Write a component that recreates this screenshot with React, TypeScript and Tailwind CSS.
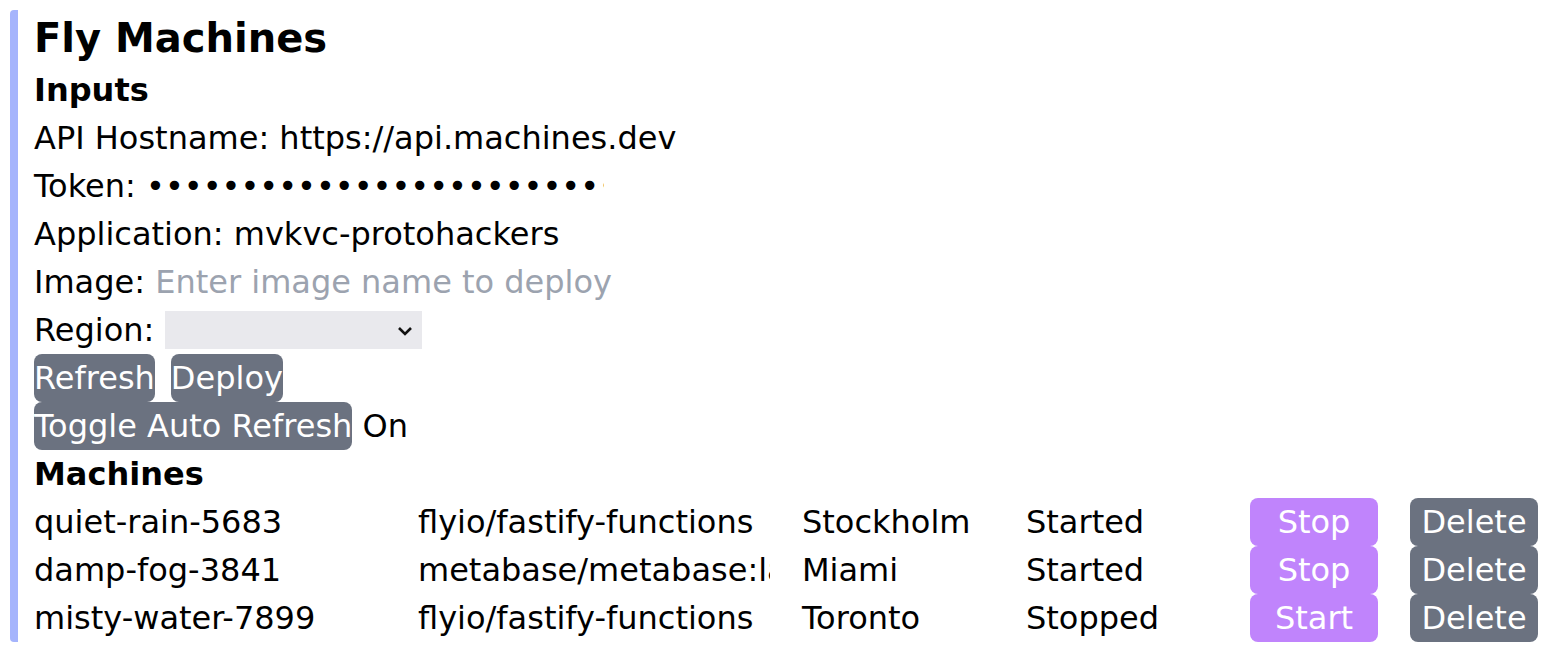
import React, { useState } from 'react';

type Machine = {
  name: string;
  image: string;
  region: string;
  state: 'Started' | 'Stopped';
};

const machines: Machine[] = [
  { name: 'quiet-rain-5683', image: 'flyio/fastify-functions', region: 'Stockholm', state: 'Started' },
  { name: 'damp-fog-3841', image: 'metabase/metabase:latest', region: 'Miami', state: 'Started' },
  { name: 'misty-water-7899', image: 'flyio/fastify-functions', region: 'Toronto', state: 'Stopped' },
];

const btn = 'h-[48px] rounded-[8px] bg-[#6b7280] text-white leading-[48px]';

const App: React.FC = () => {
  const [autoRefresh, setAutoRefresh] = useState(true);
  const [image, setImage] = useState('');

  return (
    <div className="min-h-screen bg-white text-black text-[32px] leading-[48px] font-['DejaVu_Sans',_'Noto_Sans',_sans-serif] p-[10px]">
      <div className="border-l-[8px] border-[#a5b4fc] rounded-[4px] pl-[16px]">
        <h1 className="text-[40px] leading-[56px] font-bold">Fly Machines</h1>
        <h2 className="font-bold">Inputs</h2>

        <div className="flex items-center h-[48px]">
          <span className="whitespace-pre">API Hostname: </span>
          <input className="w-[456px] outline-none bg-transparent p-0" defaultValue="https://api.machines.dev" />
        </div>
        <div className="flex items-center h-[48px]">
          <span className="whitespace-pre">Token: </span>
          <input
            type="password"
            className="w-[458px] outline-none bg-transparent p-0"
            defaultValue="fo1_xxxxxxxxxxxxxxxxxxxxxxxxxxxxxxxxxxxxxxxx"
          />
        </div>
        <div className="flex items-center h-[48px]">
          <span className="whitespace-pre">Application: </span>
          <input className="w-[456px] outline-none bg-transparent p-0" defaultValue="mvkvc-protohackers" />
        </div>
        <div className="flex items-center h-[48px]">
          <span className="whitespace-pre">Image: </span>
          <input
            className="w-[458px] outline-none bg-transparent p-0 placeholder:text-[#9ca3af]"
            placeholder="Enter image name to deploy"
            value={image}
            onChange={(e) => setImage(e.target.value)}
          />
        </div>
        <div className="flex items-center h-[48px]">
          <span className="whitespace-pre">Region: </span>
          <div className="relative w-[257px] h-[38px] bg-[#e9e9ed]">
            <select className="appearance-none w-full h-full bg-transparent outline-none text-[26px]" />
            <svg className="absolute right-[9px] top-[15px] pointer-events-none" width="16" height="10" viewBox="0 0 16 10">
              <path d="M2 2 L8 8 L14 2" fill="none" stroke="#111" strokeWidth="2.6" />
            </svg>
          </div>
        </div>

        <div className="flex gap-[16px]">
          <button className={btn}>Refresh</button>
          <button className={btn}>Deploy</button>
        </div>
        <div className="flex items-center">
          <button className={btn} onClick={() => setAutoRefresh(!autoRefresh)}>
            Toggle Auto Refresh
          </button>
          <span className="whitespace-pre"> {autoRefresh ? 'On' : 'Off'}</span>
        </div>

        <h2 className="font-bold">Machines</h2>
        <div className="flex flex-col">
          {machines.map((m) => (
            <div key={m.name} className="flex h-[48px] items-center">
              <div className="w-[384px] whitespace-nowrap">{m.name}</div>
              <div className="w-[352px] mr-[32px] whitespace-nowrap overflow-hidden">{m.image}</div>
              <div className="w-[224px]">{m.region}</div>
              <div className="w-[224px]">{m.state}</div>
              <button className="w-[128px] h-[48px] rounded-[8px] bg-[#c084fc] text-white">
                {m.state === 'Started' ? 'Stop' : 'Start'}
              </button>
              <button className={`${btn} w-[128px] ml-[32px]`}>Delete</button>
            </div>
          ))}
        </div>
      </div>
    </div>
  );
};

export default App;
